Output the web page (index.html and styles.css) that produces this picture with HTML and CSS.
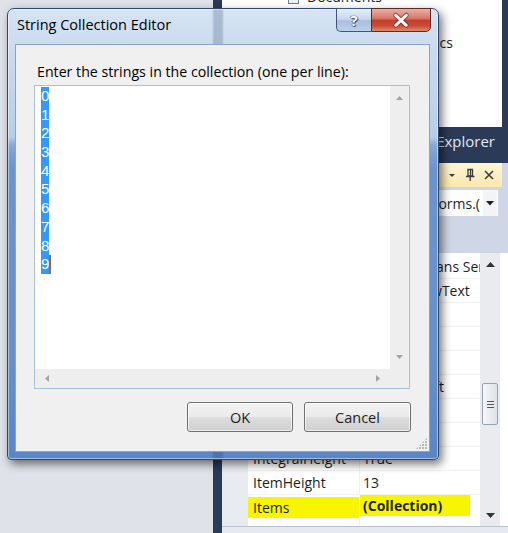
FILE: index.html
```html
<!DOCTYPE html>
<html>
<head>
<meta charset="utf-8">
<title>String Collection Editor</title>
<link rel="stylesheet" href="styles.css">
</head>
<body>
<div class="ide">
  <div class="designer"></div>
  <div class="splitter"></div>
  <div class="dock">
    <div class="sol-tree">
      <div class="tree-row first"><span class="file-ico"></span>Documents</div>
      <div class="tree-row first-col"><span class="file-ico"></span>Form1.cs</div>
      <div class="tree-row right">Graphics</div>
    </div>
    <div class="tabstrip">Solution Explorer</div>
    <div class="props">
      <div class="props-head">
        <svg class="ph-ico" width="10" height="10" viewBox="0 0 10 10"><path d="M2 4 L8 4 L5 7 Z" fill="#3c3c3c"/></svg>
        <svg class="ph-ico" width="12" height="14" viewBox="0 0 12 14"><path d="M4 1.5 H8.5 V8 H4 Z M6.5 1.5 V8 M2 8.5 H10.5 M6.2 8.5 V13" fill="none" stroke="#3c3c3c" stroke-width="1.3"/></svg>
        <svg class="ph-ico" width="12" height="12" viewBox="0 0 12 12"><path d="M2 2 L10 10 M10 2 L2 10" stroke="#3c3c3c" stroke-width="1.6"/></svg>
      </div>
      <div class="props-combo">
        <div class="combo">
          <div class="combo-text"><span>listBox1 System.Windows.Forms.(</span></div>
          <div class="combo-btn"><svg width="8" height="5" viewBox="0 0 8 5"><path d="M0 0 H8 L4 4.5 Z" fill="#1e1e1e"/></svg></div>
        </div>
      </div>
      <div class="props-toolbar"></div>
      <div class="grid-wrap">
        <div class="grid">
          <div class="row"><div class="gut"></div><div class="nm">Font</div><div class="vl">Microsoft Sans Serif, 8.25pt</div></div>
          <div class="row"><div class="gut"></div><div class="nm">ForeColor</div><div class="vl"><span class="swatch"></span>WindowText</div></div>
          <div class="row"><div class="gut"></div><div class="nm">FormattingEnabled</div><div class="vl">True</div></div>
          <div class="row"><div class="gut"></div><div class="nm">GenerateMember</div><div class="vl">True</div></div>
          <div class="row"><div class="gut"></div><div class="nm">HorizontalExtent</div><div class="vl">0</div></div>
          <div class="row"><div class="gut"></div><div class="nm">Anchor</div><div class="vl">Bottom, Left</div></div>
          <div class="row"><div class="gut"></div><div class="nm">HorizontalScrollbar</div><div class="vl">False</div></div>
          <div class="row"><div class="gut"></div><div class="nm">ImeMode</div><div class="vl">NoControl</div></div>
          <div class="row"><div class="gut"></div><div class="nm">IntegralHeight</div><div class="vl">True</div></div>
          <div class="row"><div class="gut"></div><div class="nm">ItemHeight</div><div class="vl">13</div></div>
          <div class="row hl"><div class="gut"></div><div class="nm"><span class="mark mark-n">Items</span></div><div class="vl"><span class="mark mark-v">(Collection)</span></div></div>
          <div class="row"><div class="gut"></div><div class="nm">Location</div><div class="vl">6, 60</div></div>
        </div>
        <div class="gscroll">
          <div class="gs-btn"><svg width="9" height="5" viewBox="0 0 9 5"><path d="M0 5 L4.5 0 L9 5 Z" fill="#333"/></svg></div>
          <div class="gs-track"><div class="gs-thumb"><span></span><span></span><span></span></div></div>
          <div class="gs-btn"><svg width="9" height="5" viewBox="0 0 9 5"><path d="M0 0 L4.5 5 L9 0 Z" fill="#333"/></svg></div>
        </div>
      </div>
      <div class="props-desc"></div>
    </div>
  </div>
</div>

<div class="dialog">
  <div class="titlebar">
    <span class="title">String Collection Editor</span>
    <div class="caption-btns">
      <div class="cbtn help">?</div>
      <div class="cbtn close">
        <svg width="60" height="23" viewBox="0 0 60 23"><path d="M24.5 6 L35.5 16.5 M35.5 6 L24.5 16.5" stroke="#5a1a12" stroke-width="5" stroke-linecap="round" opacity=".55"/><path d="M24.5 6 L35.5 16.5 M35.5 6 L24.5 16.5" stroke="#ffffff" stroke-width="3" stroke-linecap="round"/></svg>
      </div>
    </div>
  </div>
  <div class="client">
    <div class="prompt">Enter the strings in the collection (one per line):</div>
    <div class="editor">
      <div class="editor-main">
        <div class="text-area">
          <div class="ln"><span class="sel">0</span></div>
          <div class="ln"><span class="sel">1</span></div>
          <div class="ln"><span class="sel">2</span></div>
          <div class="ln"><span class="sel">3</span></div>
          <div class="ln"><span class="sel">4</span></div>
          <div class="ln"><span class="sel">5</span></div>
          <div class="ln"><span class="sel">6</span></div>
          <div class="ln"><span class="sel">7</span></div>
          <div class="ln"><span class="sel">8</span></div>
          <div class="ln"><span class="sel">9</span><span class="caret"></span></div>
        </div>
        <div class="vbar">
          <div class="sb-btn v"><svg width="7" height="4" viewBox="0 0 7 4"><path d="M0 4 L3.5 0 L7 4 Z" fill="#a3a3a3"/></svg></div>
          <div class="sb-track"></div>
          <div class="sb-btn v"><svg width="7" height="4" viewBox="0 0 7 4"><path d="M0 0 L3.5 4 L7 0 Z" fill="#a3a3a3"/></svg></div>
        </div>
      </div>
      <div class="hbar-row">
        <div class="hbar">
          <div class="sb-btn h"><svg width="4" height="7" viewBox="0 0 4 7"><path d="M4 0 L0 3.5 L4 7 Z" fill="#a3a3a3"/></svg></div>
          <div class="sb-track"></div>
          <div class="sb-btn h"><svg width="4" height="7" viewBox="0 0 4 7"><path d="M0 0 L4 3.5 L0 7 Z" fill="#a3a3a3"/></svg></div>
        </div>
        <div class="corner"></div>
      </div>
    </div>
    <div class="buttons">
      <button class="btn ok">OK</button>
      <button class="btn cancel">Cancel</button>
    </div>
    <div class="grip"></div>
  </div>
</div>
</body>
</html>
```
FILE: styles.css
```css
* { box-sizing: border-box; }
html, body { margin: 0; padding: 0; }
body {
  width: 508px;
  height: 533px;
  overflow: hidden;
  position: relative;
  background: #dfe3e9;
  font-family: "Open Sans", "Noto Sans", sans-serif;
  color: #1e1e1e;
}

/* ---------- IDE background ---------- */
.ide { display: flex; height: 533px; }
.designer { width: 213px; background: #dfe3e9; flex: none; }
.splitter { width: 9px; background: #2b3a57; flex: none; }
.dock {
  flex: 1;
  min-width: 0;
  display: flex;
  flex-direction: column;
  background: #2b3a57;
}
.dock > * { flex: none; }
.sol-tree {
  height: 127px;
  margin-right: 6px;
  background: #ffffff;
  overflow: hidden;
  font-size: 14px;
}
.tree-row {
  height: 23px;
  display: flex;
  align-items: center;
  white-space: nowrap;
}
.tree-row.first { margin-top: -15px; padding-left: 66px; }
.tree-row.first-col { padding-left: 66px; }
.tree-row.right { width: 231px; justify-content: flex-end; }
.file-ico {
  width: 11px;
  height: 14px;
  border: 1px solid #6f7d92;
  background: #eef2f7;
  margin-right: 8px;
}
.tabstrip {
  height: 36px;
  display: flex;
  align-items: center;
  justify-content: flex-end;
  padding: 0 13px 9px 0;
  color: #e2e8f1;
  font-size: 15px;
  white-space: nowrap;
}
.dock > .props {
  flex: 1 1 auto;
  min-height: 0;
  display: flex;
  flex-direction: column;
  background: #cfd6e5;
}
.props > * { flex: none; }
.props-head {
  height: 24px;
  margin-right: 6px;
  background: linear-gradient(#fdf5d8, #fbe8ad);
  display: flex;
  align-items: center;
  justify-content: flex-end;
  gap: 7px;
  padding-right: 7px;
}
.ph-ico { display: block; }
.props-combo { height: 32px; padding: 3px 10px 3px 0; }
.combo {
  height: 100%;
  background: #fff;
  display: flex;
  align-items: center;
  overflow: hidden;
}
.combo-text {
  flex: 1;
  display: flex;
  justify-content: flex-end;
  overflow: hidden;
  white-space: nowrap;
  font-size: 14px;
  padding-right: 3px;
}
.combo-btn {
  width: 14px;
  height: 100%;
  display: flex;
  align-items: center;
  justify-content: center;
  background: #f2f4f8;
  margin-right: 1px;
}
.props-toolbar { height: 34px; }
.props > .grid-wrap {
  flex: 1 1 auto;
  min-height: 0;
  display: flex;
  background: #fff;
  overflow: hidden;
}
.grid { flex: 1; min-width: 0; padding-top: 2px; overflow: hidden; }
.row {
  display: grid;
  grid-template-columns: 26px 112px 120px;
  height: 24px;
  font-size: 14px;
  white-space: nowrap;
}
.gut { background: #e8ebf0; }
.nm, .vl {
  overflow: hidden;
  display: flex;
  align-items: center;
  border-bottom: 1px solid #f0f0f0;
}
.nm { padding-left: 5px; border-right: 1px solid #f0f0f0; }
.vl { padding-left: 3px; }
.swatch {
  width: 20px;
  height: 13px;
  border: 1px solid #000;
  background: #000;
  margin: 0 5px 0 1px;
  flex: none;
}
.row.hl .nm, .row.hl .vl { border-bottom-color: transparent; border-right-color: transparent; }
.mark { background: #f7f500; display: flex; align-items: center; height: 22px; flex: none; }
.mark-n { margin-left: -5px; padding-left: 5px; width: 113px; margin-top: 2px; }
.mark-v { margin-left: -3px; padding-left: 3px; width: 110px; font-weight: bold; margin-top: -3px; }
.gscroll {
  width: 20px;
  flex: none;
  display: flex;
  flex-direction: column;
  background: #e9ebef;
  margin-right: 8px;
}
.gs-btn {
  height: 22px;
  display: flex;
  align-items: center;
  justify-content: center;
}
.gs-track { flex: 1; padding: 108px 2px 0; }
.gs-thumb {
  height: 42px;
  border: 1px solid #9aa3b3;
  border-radius: 2px;
  background: linear-gradient(to right, #f6f7f9, #dde1e8);
  display: flex;
  flex-direction: column;
  justify-content: center;
  align-items: center;
  gap: 2px;
}
.gs-thumb span { width: 7px; height: 1px; background: #555; display: block; }
.props-desc { height: 7px; border-top: 1px solid #b9c1cf; background: #e6e9ef; }

/* ---------- Dialog ---------- */
.dialog {
  position: absolute;
  left: 7px;
  top: 8px;
  width: 432px;
  height: 452px;
  border: 1px solid #30486c;
  border-radius: 7px 7px 4px 4px;
  background:
    linear-gradient(to right, transparent 204px, rgba(30, 50, 90, 0.22) 206px, rgba(30, 50, 90, 0.22) 214px, transparent 216px),
    linear-gradient(to bottom,
      #d5e3f2 0px, #c6d8ee 60px, #b8cde8 128px, #87a8d7 136px,
      #6c93cc 160px, #6790ca 350px, #5a86c6 452px);
  box-shadow: 3px 4px 10px rgba(0, 0, 0, 0.55), inset 0 0 0 1px rgba(255, 255, 255, 0.45);
  display: flex;
  flex-direction: column;
  font-family: "Open Sans", "Noto Sans", sans-serif;
}
.titlebar {
  height: 35px;
  flex: none;
  display: flex;
  align-items: flex-start;
}
.title {
  margin: 6px 0 0 9px;
  font-size: 14.5px;
  line-height: 20px;
  color: #000;
  white-space: nowrap;
}
.caption-btns {
  margin: -1px 7px 0 auto;
  display: flex;
  height: 24px;
}
.cbtn {
  height: 24px;
  border: 1px solid #3d5679;
  display: flex;
  align-items: center;
  justify-content: center;
}
.help {
  width: 35px;
  border-right: none;
  border-radius: 0 0 0 5px;
  background: linear-gradient(#e6eef7 0%, #c9d8ec 45%, #a9bfde 55%, #bcd0ea 100%);
  color: #fff;
  font-weight: bold;
  font-size: 15px;
  text-shadow: 0 0 1px #25385a, 0 0 1px #25385a, 1px 1px 0 #4a5f82;
}
.close {
  width: 60px;
  border-color: #5b2a25;
  border-radius: 0 0 5px 0;
  background: linear-gradient(#eab0a6 0%, #d9786a 42%, #c3402f 52%, #c84a35 75%, #e28a6a 100%);
}
.client {
  flex: 1;
  margin: 0 8px 7px 7px;
  border: 1px solid #8aa2c4;
  background: #f0f0f0;
  position: relative;
  display: flex;
  flex-direction: column;
}
.prompt {
  padding: 17px 0 0 21px;
  font-size: 14.2px;
  line-height: 20px;
  color: #000;
  white-space: nowrap;
}
.editor {
  margin: 3px 19px 0 18px;
  height: 304px;
  flex: none;
  border: 1px solid #a9c0dd;
  background: #fff;
  display: flex;
  flex-direction: column;
}
.editor-main { flex: 1; display: flex; }
.text-area {
  flex: 1;
  padding: 1px 0 0 6px;
  font-family: "Liberation Sans", Arial, sans-serif;
  font-size: 15px;
}
.ln { height: 18.7px; line-height: 18.7px; display: flex; align-items: stretch; }
.sel { background: #3399ff; color: #fff; display: block; }
.caret { width: 2px; background: #9a6a3a; display: block; }
.vbar {
  width: 19px;
  display: flex;
  flex-direction: column;
  background: #eeeeee;
}
.sb-btn { display: flex; align-items: center; justify-content: center; }
.sb-btn.v { height: 24px; }
.sb-btn.h { width: 24px; }
.sb-track { flex: 1; }
.hbar-row { height: 19px; display: flex; flex: none; }
.hbar { flex: 1; display: flex; background: #eeeeee; }
.corner { width: 19px; background: #eeeeee; }
.buttons {
  margin: 13px 18px 0 0;
  display: flex;
  justify-content: flex-end;
  gap: 11px;
}
.btn {
  height: 30px;
  border: 1px solid #707070;
  border-radius: 3px;
  background: linear-gradient(#f2f2f2 0%, #ebebeb 48%, #dddddd 52%, #cfcfcf 100%);
  box-shadow: inset 0 0 0 1px rgba(255, 255, 255, 0.7);
  font-family: "Open Sans", "Noto Sans", sans-serif;
  font-size: 14.5px;
  color: #1e1e1e;
  padding: 0;
}
.ok { width: 106px; }
.cancel { width: 107px; }
.grip {
  position: absolute;
  right: 2px;
  bottom: 2px;
  width: 11px;
  height: 11px;
  background:
    radial-gradient(circle at 1px 1px, #b9b9b9 1px, transparent 1.2px) 0 0 / 3px 3px;
  clip-path: polygon(100% 0, 100% 100%, 0 100%);
}
```
